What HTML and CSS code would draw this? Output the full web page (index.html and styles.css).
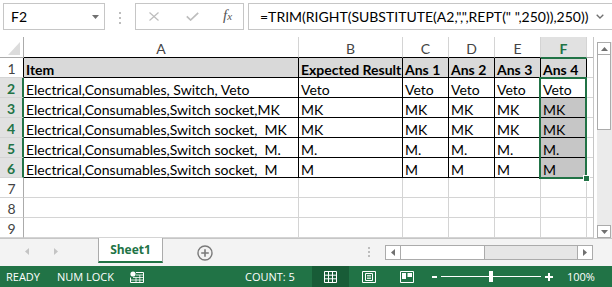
FILE: index.html
```html
<!DOCTYPE html>
<html>
<head>
<meta charset="utf-8">
<link rel="stylesheet" href="styles.css">
</head>
<body>
<div class="app">
  <div class="fbar">
    <div class="namebox">
      <span class="nb-text">F2</span>
      <svg class="nb-arrow" width="7" height="4" viewBox="0 0 7 4"><path d="M0 0H7L3.5 4Z" fill="#707070"/></svg>
    </div>
    <div class="grip"><i></i><i></i><i></i></div>
    <div class="fxbox">
      <svg class="ic-x" width="10" height="9" viewBox="0 0 10 9"><path d="M0.5 0.5L9.5 8.5M9.5 0.5L0.5 8.5" stroke="#bdbdbd" stroke-width="1.2" fill="none"/></svg>
      <svg class="ic-check" width="13" height="9" viewBox="0 0 13 9"><path d="M0.8 4.3L4.6 8L12.2 0.8" stroke="#bdbdbd" stroke-width="1.7" fill="none"/></svg>
      <span class="fx"><i>f</i><i class="fx-x">x</i></span>
    </div>
    <div class="formula">
      <span class="ftext">=TRIM(RIGHT(SUBSTITUTE(A2,",",REPT(" ",250)),250))</span>
      <svg class="f-chev" width="8" height="5" viewBox="0 0 8 5"><path d="M0.7 0.7L4 4L7.3 0.7" stroke="#707070" stroke-width="1.3" fill="none"/></svg>
    </div>
  </div>

  <div class="main">
    <div class="sheet">
      <div class="corner"><svg width="12" height="13" viewBox="0 0 12 13"><path d="M12 0V13H0Z" fill="#dcdcdc"/></svg></div>
      <div class="ch t">A</div>
      <div class="ch t">B</div>
      <div class="ch t">C</div>
      <div class="ch t">D</div>
      <div class="ch t">E</div>
      <div class="ch t act">F</div>
      <div class="ch g"></div>

      <div class="rh r1">1</div>
      <div class="c t h">Item</div>
      <div class="c t h">Expected Result</div>
      <div class="c t h">Ans 1</div>
      <div class="c t h">Ans 2</div>
      <div class="c t h">Ans 3</div>
      <div class="c t h">Ans 4</div>
      <div class="c g"></div>

      <div class="rh sel">2</div>
      <div class="c t">Electrical,Consumables, Switch, Veto</div>
      <div class="c t">Veto</div>
      <div class="c t">Veto</div>
      <div class="c t">Veto</div>
      <div class="c t">Veto</div>
      <div class="c t">Veto</div>
      <div class="c g"></div>

      <div class="rh sel">3</div>
      <div class="c t">Electrical,Consumables,Switch socket,MK</div>
      <div class="c t">MK</div>
      <div class="c t">MK</div>
      <div class="c t">MK</div>
      <div class="c t">MK</div>
      <div class="c t s">MK</div>
      <div class="c g"></div>

      <div class="rh sel">4</div>
      <div class="c t">Electrical,Consumables,Switch socket,  MK</div>
      <div class="c t">MK</div>
      <div class="c t">MK</div>
      <div class="c t">MK</div>
      <div class="c t">MK</div>
      <div class="c t s">MK</div>
      <div class="c g"></div>

      <div class="rh sel">5</div>
      <div class="c t">Electrical,Consumables,Switch socket,  M.</div>
      <div class="c t">M.</div>
      <div class="c t">M.</div>
      <div class="c t">M.</div>
      <div class="c t">M.</div>
      <div class="c t s">M.</div>
      <div class="c g"></div>

      <div class="rh sel">6</div>
      <div class="c t">Electrical,Consumables,Switch socket,  M</div>
      <div class="c t">M</div>
      <div class="c t">M</div>
      <div class="c t">M</div>
      <div class="c t">M</div>
      <div class="c t s">M</div>
      <div class="c g"></div>

      <div class="rh">7</div>
      <div class="c"></div><div class="c"></div><div class="c"></div><div class="c"></div><div class="c"></div><div class="c"></div><div class="c g"></div>

      <div class="rh">8</div>
      <div class="c"></div><div class="c"></div><div class="c"></div><div class="c"></div><div class="c"></div><div class="c"></div><div class="c g"></div>

      <div class="rh">9</div>
      <div class="c"></div><div class="c"></div><div class="c"></div><div class="c"></div><div class="c"></div><div class="c"></div><div class="c g"></div>

      <div class="selection"></div>
      <div class="handle"></div>
    </div>

    <div class="vscroll">
      <div class="vtrack">
        <div class="varrow"><svg width="7" height="4" viewBox="0 0 7 4"><path d="M0 4H7L3.5 0Z" fill="#707070"/></svg></div>
        <div class="vthumb"></div>
        <div class="vspace"></div>
        <div class="varrow down"><svg width="7" height="4" viewBox="0 0 7 4"><path d="M0 0H7L3.5 4Z" fill="#707070"/></svg></div>
      </div>
    </div>
  </div>

  <div class="tabbar">
    <div class="navs">
      <svg class="nav-l" width="4" height="7" viewBox="0 0 4 7"><path d="M4 0V7L0 3.5Z" fill="#c4c4c4"/></svg>
      <svg class="nav-r" width="4" height="7" viewBox="0 0 4 7"><path d="M0 0V7L4 3.5Z" fill="#c4c4c4"/></svg>
    </div>
    <div class="tab">Sheet1</div>
    <svg class="addsheet" width="16" height="16" viewBox="0 0 16 16"><circle cx="8" cy="8" r="7" fill="none" stroke="#7a7a7a" stroke-width="1.4"/><path d="M8 4.2V11.8M4.2 8H11.8" stroke="#7a7a7a" stroke-width="1.6"/></svg>
    <div class="hgrip"><i></i><i></i><i></i></div>
    <div class="hscroll">
      <div class="harrow"><svg width="4" height="7" viewBox="0 0 4 7"><path d="M4 0V7L0 3.5Z" fill="#707070"/></svg></div>
      <div class="hthumb"></div>
      <div class="htrack"></div>
      <div class="harrow r"><svg width="4" height="7" viewBox="0 0 4 7"><path d="M0 0V7L4 3.5Z" fill="#707070"/></svg></div>
    </div>
  </div>

  <div class="status">
    <span class="s-ready">READY</span>
    <span class="s-num">NUM LOCK</span>
    <span class="s-icon"><svg width="14" height="12" viewBox="0 0 14 12"><circle cx="3" cy="3" r="2.6" fill="#fff"/><path d="M6 1.5H13.5V11.5H0.5V6.5" fill="none" stroke="#fff"/><path d="M3 6.5H13.5M1 9H13.5M6 4H13.5M6 6.5V11.5M9.8 4V11.5" fill="none" stroke="#fff" stroke-width="0.8"/></svg></span>
    <span class="s-count">COUNT: 5</span>
    <span class="s-view active"><svg width="13" height="12" viewBox="0 0 13 12"><path d="M0.5 0.5H12.5V11.5H0.5ZM0.5 4.2H12.5M0.5 7.8H12.5M4.5 0.5V11.5M8.5 0.5V11.5" fill="none" stroke="#fff"/></svg></span>
    <span class="s-view v2"><svg width="14" height="12" viewBox="0 0 14 12"><path d="M0.5 0.5H13.5V11.5H0.5Z" fill="none" stroke="#fff"/><path d="M3.5 2.5H10.5V9.5H3.5Z" fill="none" stroke="#fff"/><path d="M5 4.5H9M5 6H9M5 7.5H9" stroke="#fff" stroke-width="0.8"/></svg></span>
    <span class="s-view v3"><svg width="14" height="12" viewBox="0 0 14 12"><path d="M0.5 0.5H13.5V11.5H0.5Z" fill="none" stroke="#fff"/><path d="M2 2H6V8H2ZM7.5 2H12V6H7.5Z" fill="#fff"/></svg></span>
    <svg class="s-zoom" width="122" height="21" viewBox="0 0 122 21"><rect x="0" y="10" width="5" height="2" fill="#fff"/><rect x="9" y="10" width="100" height="1" fill="#fff"/><rect x="57" y="5" width="4" height="11" fill="#fff"/><rect x="113" y="10" width="8" height="2" fill="#fff"/><rect x="116" y="7" width="2" height="8" fill="#fff"/></svg>
    <span class="s-pct">100%</span>
  </div>
</div>
</body>
</html>
```

FILE: styles.css
```css
html, body {
  margin: 0;
  padding: 0;
}
body {
  width: 612px;
  height: 287px;
  overflow: hidden;
  background: #fff;
  font-family: Lato, "Open Sans", sans-serif;
  color: #000;
}
.app {
  width: 612px;
  height: 287px;
  display: flex;
  flex-direction: column;
}

/* formula bar */
.fbar {
  height: 37px;
  box-sizing: border-box;
  padding: 3px 0 0 3px;
  display: flex;
  align-items: flex-start;
  flex: none;
}
.namebox {
  flex: none;
  width: 102px;
  height: 27px;
  box-sizing: border-box;
  border: 1px solid #c6c6c6;
  display: flex;
  align-items: center;
  padding-left: 7px;
  font-size: 14px;
}
.nb-arrow {
  margin-left: auto;
  margin-right: 5px;
}
.grip {
  flex: none;
  width: 30px;
  height: 27px;
  display: flex;
  flex-direction: column;
  align-items: center;
  gap: 3px;
  padding-top: 9px;
  box-sizing: border-box;
}
.grip i, .hgrip i {
  display: block;
  width: 2px;
  height: 2px;
  background: #bdbdbd;
}
.fxbox {
  flex: none;
  width: 109px;
  height: 27px;
  box-sizing: border-box;
  border: 1px solid #c6c6c6;
  display: flex;
  align-items: center;
  padding-left: 13px;
}
.ic-check {
  margin-left: 27px;
}
.fx {
  margin-left: 24px;
  font-family: "Liberation Serif", serif;
  color: #555;
  font-size: 15px;
  line-height: 1;
  margin-top: -2px;
}
.fx-x {
  font-size: 11px;
}
.formula {
  flex: 1;
  min-width: 0;
  margin-left: 4px;
  height: 27px;
  box-sizing: border-box;
  border: 1px solid #c6c6c6;
  border-right: none;
  display: flex;
  align-items: center;
  padding-left: 11px;
  font-size: 14px;
  white-space: pre;
}
.ftext {
  flex: none;
}
.f-chev {
  flex: none;
  margin-left: auto;
  margin-right: 8px;
}

/* main sheet area */
.main {
  height: 201px;
  display: flex;
  flex: none;
}
.sheet {
  flex: none;
  width: 593px;
  height: 201px;
  position: relative;
  overflow: hidden;
  display: grid;
  grid-template-columns: 24px 275px 104px 46px 46px 46px 46px 6px;
  grid-template-rows: 21px repeat(9, 20px);
  font-size: 14px;
}
.sheet > div {
  box-sizing: border-box;
  white-space: pre;
  line-height: 17px;
  padding-top: 3px;
}
.corner {
  border-right: 1px solid #ababab;
  border-bottom: 1px solid #ababab;
  display: flex;
  align-items: flex-end;
  justify-content: flex-end;
  padding: 0 3px 2px 0 !important;
}
.corner svg {
  display: block;
}
.ch {
  border-right: 1px solid #d4d4d4;
  border-bottom: 1px solid #ababab;
  text-align: center;
  color: #444;
}
.ch.t {
  border-bottom-color: #000;
}
.ch.act {
  background: #e1e1e1;
  color: #217346;
  font-weight: bold;
  border-bottom-color: #217346;
  box-shadow: 0 1px 0 #217346;
  position: relative;
  z-index: 1;
}
.ch.g {
  border-right: none;
}
.rh {
  border-right: 1px solid #ababab;
  border-bottom: 1px solid #d4d4d4;
  text-align: center;
  color: #444;
  padding-top: 2px !important;
}
.rh.r1 {
  border-right-color: #000;
}
.rh.sel {
  background: #e1e1e1;
  color: #217346;
  font-weight: bold;
  border-right: 2px solid #217346;
}
.c {
  border-right: 1px solid #d4d4d4;
  border-bottom: 1px solid #d4d4d4;
  padding-left: 2px;
}
.c.t {
  border-right-color: #000;
  border-bottom-color: #000;
}
.c.h {
  background: #d9d9d9;
  font-weight: bold;
}
.c.s {
  background: #c6c6c6;
}
.c.g {
  border-right: none;
}
.sheet > .selection {
  position: absolute;
  left: 539px;
  top: 40px;
  width: 48px;
  height: 102px;
  border: 2px solid #217346;
  padding: 0;
  box-sizing: border-box;
}
.sheet > .handle {
  position: absolute;
  left: 584px;
  top: 139px;
  width: 5px;
  height: 5px;
  padding: 0;
  background: #217346;
  box-shadow: 0 0 0 1px #fff;
}

/* vertical scrollbar */
.vscroll {
  flex: none;
  width: 19px;
  height: 201px;
  box-sizing: border-box;
  border-left: 1px solid #c6c6c6;
  padding: 5px 0 0 3px;
  background: #fff;
}
.vtrack {
  height: 196px;
  background: #ebebeb;
  display: flex;
  flex-direction: column;
}
.varrow {
  height: 13px;
  flex: none;
  box-sizing: border-box;
  width: 14px;
  border: 1px solid #ababab;
  background: #fff;
  display: flex;
  align-items: center;
  justify-content: center;
}
.vthumb {
  flex: none;
  height: 75px;
  width: 14px;
  box-sizing: border-box;
  border: 1px solid #ababab;
  border-top: none;
  background: #fff;
}
.vspace {
  flex: 1;
}

/* sheet tabs */
.tabbar {
  height: 28px;
  box-sizing: border-box;
  border-top: 1px solid #c6c6c6;
  background: #f3f3f3;
  display: flex;
  align-items: flex-start;
  flex: none;
}
.tabbar > * {
  flex: none;
}
.navs {
  width: 98px;
  display: flex;
  padding-top: 9px;
}
.nav-l {
  margin-left: 25px;
}
.nav-r {
  margin-left: 25px;
}
.tab {
  width: 65px;
  height: 25px;
  margin-top: -1px;
  box-sizing: border-box;
  background: #fff;
  border-left: 1px solid #ababab;
  border-right: 1px solid #ababab;
  border-bottom: 2px solid #217346;
  text-align: center;
  font-family: "Open Sans", sans-serif;
  font-weight: bold;
  font-size: 12px;
  line-height: 16px;
  padding-top: 4px;
  color: #217346;
}
.addsheet {
  margin: 6px 0 0 34px;
}
.hgrip {
  margin: 8px 0 0 155px;
  display: flex;
  flex-direction: column;
  gap: 2px;
}
.hscroll {
  margin: 6px 0 0 15px;
  width: 208px;
  height: 15px;
  display: flex;
  box-sizing: border-box;
  border: 1px solid #ababab;
  background: #e6e6e6;
}
.harrow {
  width: 14px;
  background: #fff;
  display: flex;
  align-items: center;
  justify-content: center;
  flex: none;
}
.harrow.r {
  border-left: 1px solid #ababab;
}
.hthumb {
  width: 83px;
  background: #fff;
  border-left: 1px solid #ababab;
  border-right: 1px solid #ababab;
  flex: none;
}
.htrack {
  flex: 1;
}

/* status bar */
.status {
  height: 21px;
  flex: none;
  background: #217346;
  color: #fff;
  display: flex;
  align-items: center;
  padding-left: 6px;
  font-family: "Open Sans", sans-serif;
  font-size: 11px;
}
.status > span {
  flex: none;
  display: flex;
  align-items: center;
  height: 21px;
}
.s-ready { width: 51px; }
.s-num { width: 73px; }
.s-icon { width: 115px; }
.s-count { width: 67px; }
.s-view {
  justify-content: center;
}
.s-view.active {
  width: 37px;
  background: #185c37;
}
.s-view.v2 { width: 39px; }
.s-view.v3 { width: 38px; }
.s-zoom {
  margin-left: 6px;
  flex: none;
}
.s-pct {
  margin-left: 13px;
}
```
